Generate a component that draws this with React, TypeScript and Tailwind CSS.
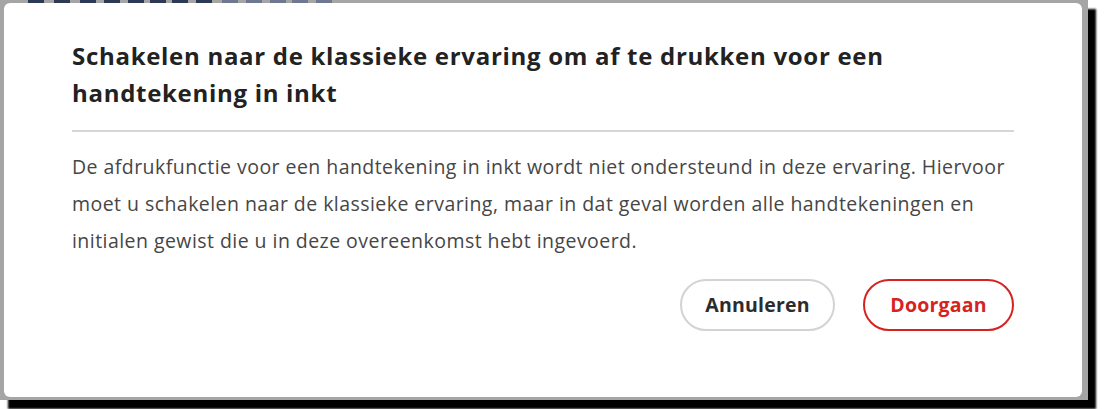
import React from 'react';

const FONT = { fontFamily: '"Open Sans", "Noto Sans", sans-serif' };

function BackdropStrip() {
  // bits of the page behind the dialog, peeking through at the top edge
  const bits = [28, 54, 80, 104, 128, 150, 172, 196, 222, 246, 270, 292, 316];
  return (
    <div className="absolute left-0 top-0 h-[3px] w-[350px]">
      {bits.map((x, i) => (
        <div
          key={x}
          className={i < 8 ? 'absolute top-0 h-[3px] w-[16px] bg-[#2d3a55]' : 'absolute top-0 h-[3px] w-[16px] bg-[#6e7891]'}
          style={{ left: x }}
        />
      ))}
    </div>
  );
}

export default function App() {
  return (
    <div className="relative w-[1112px] h-[409px] bg-white overflow-hidden" style={FONT}>
      <div className="w-[1088px] h-[400px] bg-[#a5a5a5] pt-[3px] pl-[4px] pr-[6px] pb-[3px] shadow-[8px_9px_2px_#000]">
        <div className="h-full bg-white rounded-[6px] px-[68px] pt-[34px]">
          <h1 className="text-[24px] leading-[37px] font-bold text-[#222222] tracking-[0.7px] whitespace-nowrap">
            Schakelen naar de klassieke ervaring om af te drukken voor een
            <br />
            handtekening in inkt
          </h1>
          <div className="mt-[19px] h-[2px] bg-[#d6d6d6]" />
          <p className="mt-[16px] text-[19.5px] leading-[37px] text-[#464646] tracking-[0.45px] whitespace-nowrap">
            De afdrukfunctie voor een handtekening in inkt wordt niet ondersteund in deze ervaring. Hiervoor
            <br />
            moet u schakelen naar de klassieke ervaring, maar in dat geval worden alle handtekeningen en
            <br />
            initialen gewist die u in deze overeenkomst hebt ingevoerd.
          </p>
          <div className="mt-[20px] flex justify-end gap-[28px]">
            <button className="w-[155px] h-[52px] rounded-full border-2 border-[#d3d3d3] text-[19.5px] font-bold text-[#2c2c2c] tracking-[0.2px]">
              Annuleren
            </button>
            <button className="w-[151px] h-[52px] rounded-full border-2 border-[#d7231f] text-[19.5px] font-bold text-[#d7231f] tracking-[0.2px]">
              Doorgaan
            </button>
          </div>
        </div>
      </div>
      <BackdropStrip />
    </div>
  );
}
